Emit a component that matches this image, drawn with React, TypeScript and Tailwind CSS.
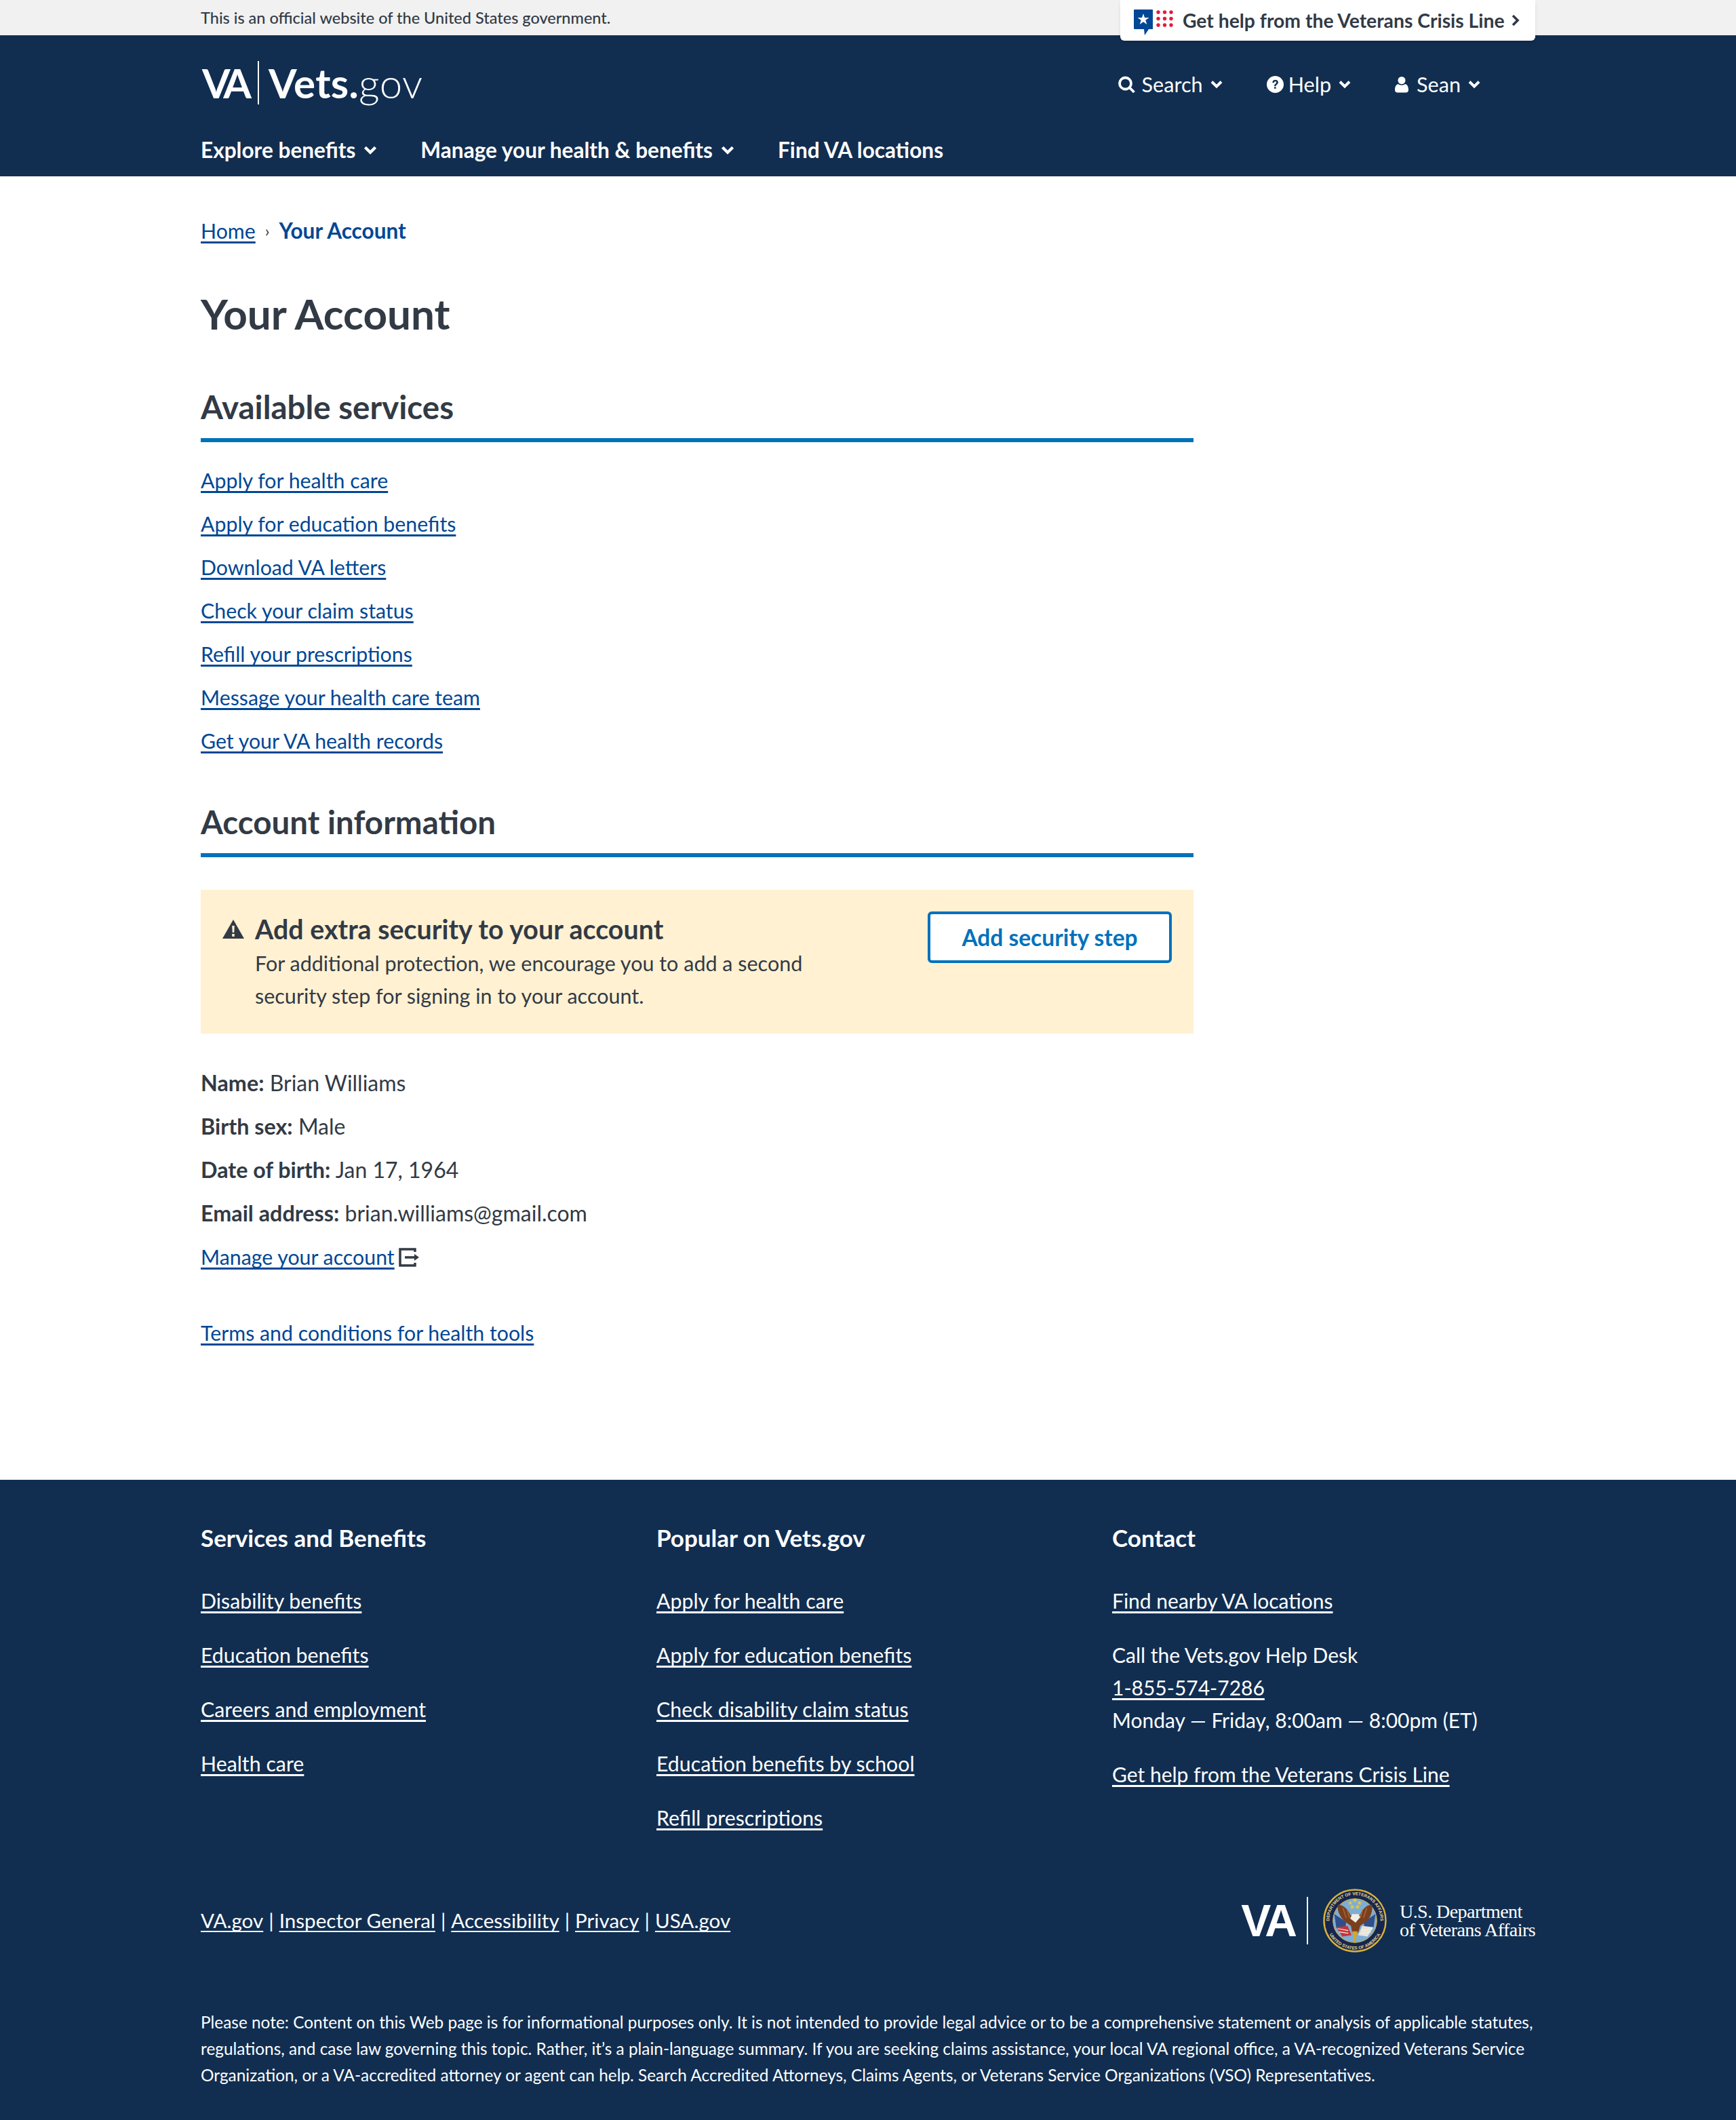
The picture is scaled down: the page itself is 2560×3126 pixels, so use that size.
import React from 'react';

const services = [
  'Apply for health care',
  'Apply for education benefits',
  'Download VA letters',
  'Check your claim status',
  'Refill your prescriptions',
  'Message your health care team',
  'Get your VA health records',
];

const profile = [
  ['Name:', 'Brian Williams'],
  ['Birth sex:', 'Male'],
  ['Date of birth:', 'Jan 17, 1964'],
  ['Email address:', 'brian.williams@gmail.com'],
];

const footerBenefits = ['Disability benefits', 'Education benefits', 'Careers and employment', 'Health care'];
const footerPopular = [
  'Apply for health care',
  'Apply for education benefits',
  'Check disability claim status',
  'Education benefits by school',
  'Refill prescriptions',
];
const legal = ['VA.gov', 'Inspector General', 'Accessibility', 'Privacy', 'USA.gov'];

function Chevron({ className }: { className?: string }) {
  return (
    <svg viewBox="0 0 18 12" className={className} fill="none" stroke="currentColor" strokeWidth="4">
      <path d="M2 2l7 7 7-7" />
    </svg>
  );
}

function CrisisIcon() {
  return (
    <svg viewBox="0 0 58 38" className="w-[58px] h-[38px]">
      <path d="M1 0h26a1 1 0 0 1 1 1v28H22l-6 9-1-9H1a1 1 0 0 1-1-1V1a1 1 0 0 1 1-1z" fill="#004795" />
      <path d="M14 6l2 6h6.500l-5.200 3.800 2 6.200-5.300-3.800L8.700 22l2-6.200L5.500 12H12z" fill="#fff" />
      {[0, 1, 2].map((col) =>
        [0, 1, 2].map((row) => (
          <circle key={`${col}-${row}`} cx={36 + col * 9.5} cy={4 + row * 9.5} r="2.700" fill="#e31c3d" />
        )),
      )}
    </svg>
  );
}

function Seal() {
  return (
    <svg viewBox="0 0 96 96" className="w-[94px] h-[94px] shrink-0">
      <defs>
        <path id="sealTop" d="M9.500 48a38.500 38.500 0 0 1 77 0" />
        <path id="sealBottom" d="M4.500 48a43.500 43.500 0 0 0 87 0" />
      </defs>
      <circle cx="48" cy="48" r="46.500" fill="#16264f" stroke="#d9b13c" strokeWidth="2.500" />
      <circle cx="48" cy="48" r="33" fill="#7eaed3" stroke="#d8b440" strokeWidth="1" />
      <text className="font-['Liberation_Sans',sans-serif]" fontSize="6.500" fontWeight="700" fill="#e8d58a">
        <textPath href="#sealTop" startOffset="50%" textAnchor="middle">DEPARTMENT OF VETERANS AFFAIRS</textPath>
      </text>
      <text className="font-['Liberation_Sans',sans-serif]" fontSize="6.500" fontWeight="700" fill="#e8d58a">
        <textPath href="#sealBottom" startOffset="50%" textAnchor="middle">UNITED STATES OF AMERICA</textPath>
      </text>
      <path d="M17 38l18 12-2 12-13-3z" fill="#2f4f8a" />
      <path d="M79 38L61 50l2 12 13-3z" fill="#2f4f8a" />
      <path d="M20 58l17-2 6 14-14 2z" fill="#c8333a" />
      <path d="M76 58l-17-2-6 14 14 2z" fill="#e9e4da" />
      <path d="M22 60l16 3M24 65l14 2M74 60l-16 3M72 65l-14 2" stroke="#f5f1e6" strokeWidth="1.200" />
      <path d="M22 24c8 0 15 6 19 15l3 3 2-4h5l2 4 3-3c4-9 10-15 18-15 1 9-2 20-10 26l-8 6-3 10h-9l-2-10-8-6c-8-6-13-17-12-26z" fill="#7a3f1c" />
      <path d="M30 29l5 15M36 31l4 13M66 29l-5 15M60 31l-4 13" stroke="#a9683a" strokeWidth="1.500" />
      <path d="M44 38h9l3 5-7 8-8-6z" fill="#f2efe6" />
      <path d="M44 64l4 19 4-19z" fill="#d8a52a" />
      {[[41, 21], [48, 17], [55, 21], [44, 27], [52, 27]].map(([x, y]) => (
        <path key={`${x}-${y}`} d={`M${x} ${y - 3}l1 2.400h2.500l-2 1.600.8 2.500-2.300-1.500-2.300 1.500.8-2.500-2-1.600h2.500z`} fill="#eec643" />
      ))}
    </svg>
  );
}

function SectionHeading({ children }: { children: React.ReactNode }) {
  return (
    <h2 className="text-[47.500px] leading-[56px] font-bold text-[#323a45] pb-[18px] border-b-[6px] border-[#0071bb]">{children}</h2>
  );
}

function BodyLink({ children }: { children: React.ReactNode }) {
  return <a href="#" className="text-[#004795] text-[30.300px] underline underline-offset-[4px] [text-decoration-skip-ink:none]">{children}</a>;
}

function FooterLink({ children }: { children: React.ReactNode }) {
  return <a href="#" className="text-white underline underline-offset-[4px] [text-decoration-skip-ink:none]">{children}</a>;
}

export default function App() {
  return (
    <div className="font-['Lato','Liberation_Sans',sans-serif] text-[32px] text-[#323a45] bg-white">
      <div className="h-[52px] bg-[#f1f1f1] relative">
        <div className="w-[1968px] mx-auto relative">
          <div className="text-[23.500px] leading-[52px] font-medium">This is an official website of the United States government.</div>
          <a href="#" className="absolute top-0 right-0 w-[612px] h-[60px] bg-white rounded-b-[6px] shadow-md z-10 flex items-center pl-[20px] text-[28.300px] font-bold">
            <span className="self-start pt-[14px] mr-[14px] flex"><CrisisIcon /></span>
            <span>Get help from the Veterans Crisis Line</span>
            <svg viewBox="0 0 12 18" className="w-[12px] h-[18px] ml-[10px]" fill="none" stroke="currentColor" strokeWidth="3.600"><path d="M2 2l7 7-7 7" /></svg>
          </a>
        </div>
      </div>

      <header className="h-[208px] bg-[#112e51] text-white">
        <div className="w-[1968px] mx-auto">
          <div className="h-[140px] flex items-center justify-between">
            <div className="flex items-center">
              <span className="text-[60px] font-bold leading-none tracking-[-7px] pl-[2px] pr-[2px]">VA</span>
              <span className="w-[2px] h-[64px] bg-white mx-[14px]" />
              <span className="text-[60px] font-bold leading-none tracking-[0.300px]">Vets.</span>
              <span className="text-[60px] font-light leading-none tracking-[0.500px]">gov</span>
            </div>
            <div className="flex items-center text-[30.600px] mr-[81px] mt-[6px]">
              <span className="flex items-center">
                <svg viewBox="0 0 26 26" className="w-[27px] h-[26px] mr-[9px]" fill="none" stroke="currentColor" strokeWidth="3.800"><circle cx="11" cy="11" r="8.500" /><path d="M17 17l7 7" /></svg>
                Search
                <Chevron className="w-[18px] h-[13px] ml-[11px]" />
              </span>
              <span className="flex items-center ml-[65px]">
                <svg viewBox="0 0 24 24" className="w-[25px] h-[25px] mr-[7px]"><circle cx="12" cy="12" r="12" fill="#fff" /><path d="M8 9.500c0-2.500 1.800-4 4.200-4s4 1.400 4 3.500c0 3-3.200 3-3.200 5.500h-2.400c0-3.400 3-3.500 3-5.400 0-.9-.6-1.400-1.500-1.400s-1.600.7-1.700 1.800zM10.600 15.500h2.500V18h-2.500z" fill="#112e51" /></svg>
                Help
                <Chevron className="w-[18px] h-[13px] ml-[11px]" />
              </span>
              <span className="flex items-center ml-[65px]">
                <svg viewBox="0 0 20 24" className="w-[20px] h-[25px] mr-[12px]" fill="#fff"><circle cx="10" cy="6" r="5.500" /><path d="M0 20c0-5 2-8 5-8.500 3 2 7 2 10 0 3 .5 5 3.500 5 8.500 0 3-2 4-4 4H4c-2 0-4-1-4-4z" /></svg>
                Sean
                <Chevron className="w-[18px] h-[13px] ml-[11px]" />
              </span>
            </div>
          </div>
          <nav className="flex items-center text-[31.600px] font-bold leading-[44px] mt-[7px]">
            <span className="flex items-center">Explore benefits<Chevron className="w-[20px] h-[13px] ml-[12px]" /></span>
            <span className="flex items-center ml-[64px]">Manage your health &amp; benefits<Chevron className="w-[20px] h-[13px] ml-[12px]" /></span>
            <span className="ml-[64px]">Find VA locations</span>
          </nav>
        </div>
      </header>

      <main className="w-[1968px] mx-auto h-[1922px] pt-[58px]">
        <div className="text-[30px] leading-[44px] flex items-center">
          <BodyLink>Home</BodyLink>
          <span className="mx-[14px] text-[24px] text-[#323a45]">›</span>
          <span className="font-bold text-[31.600px] text-[#004795]">Your Account</span>
        </div>
        <h1 className="text-[62px] leading-[72px] font-bold mt-[64px]">Your Account</h1>
        <div className="w-[1464px] mt-[74px]">
          <SectionHeading>Available services</SectionHeading>
          <ul className="mt-[24px] flex flex-col">
            {services.map((s) => (
              <li key={s} className="h-[64px] leading-[64px]"><BodyLink>{s}</BodyLink></li>
            ))}
          </ul>
          <div className="mt-[60px]"><SectionHeading>Account information</SectionHeading></div>
          <div className="mt-[48px] h-[212px] bg-[#fff1d2] flex justify-between px-[32px] pt-[32px]">
            <div className="flex">
              <svg viewBox="0 0 32 28" className="w-[32px] h-[30px] mt-[11px] mr-[16px] shrink-0"><path d="M16 0l16 28H0z" fill="#323a45" /><path d="M14.200 9h3.600l-.5 10h-2.600zM14.200 21h3.600v4h-3.600z" fill="#fff1d2" /></svg>
              <div>
                <div className="text-[39.400px] leading-[52px] font-bold">Add extra security to your account</div>
                <p className="w-[860px] text-[30.500px] leading-[48px]">For additional protection, we encourage you to add a second security step for signing in to your account.</p>
              </div>
            </div>
            <a href="#" className="w-[360px] h-[76px] border-[4px] border-[#0071bb] rounded-[6px] bg-white text-[#0071bb] text-[33.500px] font-bold flex items-center justify-center">Add security step</a>
          </div>
          <dl className="mt-[41px]">
            {profile.map(([k, v]) => (
              <div key={k} className="h-[64px] leading-[64px]"><b className="text-[32.300px]">{k}</b> {v}</div>
            ))}
          </dl>
          <div className="h-[64px] leading-[64px] flex items-center">
            <BodyLink>Manage your account</BodyLink>
            <svg viewBox="0 0 30 28" className="w-[30px] h-[28px] ml-[6px] mt-[2px]" fill="none" stroke="#323a45" strokeWidth="3.500"><path d="M24 6V2H2v24h22v-4" /><path d="M9 14h15" /><path d="M23 9l7 5-7 5z" fill="#323a45" stroke="none" /></svg>
          </div>
          <div className="mt-[48px] h-[64px] leading-[64px]"><BodyLink>Terms and conditions for health tools</BodyLink></div>
        </div>
      </main>

      <footer className="h-[944px] bg-[#112e51] text-white">
        <div className="w-[1968px] mx-auto pt-[63px]">
          <div className="grid grid-cols-[672px_672px_1fr] h-[501px]">
            <div>
              <h3 className="text-[35px] leading-[44px] font-bold mb-[49px]">Services and Benefits</h3>
              <ul className="flex flex-col gap-[36px]">
                {footerBenefits.map((s) => <li key={s} className="leading-[44px] text-[30.300px]"><FooterLink>{s}</FooterLink></li>)}
              </ul>
            </div>
            <div>
              <h3 className="text-[35px] leading-[44px] font-bold mb-[49px]">Popular on Vets.gov</h3>
              <ul className="flex flex-col gap-[36px]">
                {footerPopular.map((s) => <li key={s} className="leading-[44px] text-[30.300px]"><FooterLink>{s}</FooterLink></li>)}
              </ul>
            </div>
            <div className="text-[30px]">
              <h3 className="text-[35px] leading-[44px] font-bold mb-[49px]">Contact</h3>
              <div className="leading-[44px]"><FooterLink>Find nearby VA locations</FooterLink></div>
              <div className="mt-[34px] leading-[48px]">
                <div>Call the Vets.gov Help Desk</div>
                <div><FooterLink>1-855-574-7286</FooterLink></div>
                <div>Monday — Friday, 8:00am — 8:00pm (ET)</div>
              </div>
              <div className="mt-[34px] leading-[44px]"><FooterLink>Get help from the Veterans Crisis Line</FooterLink></div>
            </div>
          </div>
          <div className="flex items-center justify-between h-[96px] mt-[38px]">
            <div className="text-[29.600px] flex items-center">
              {legal.map((l, i) => (
                <span key={l}>
                  {i > 0 && <span className="mx-[8px]">|</span>}
                  <FooterLink>{l}</FooterLink>
                </span>
              ))}
            </div>
            <div className="flex items-center">
              <span className="font-['Liberation_Sans',sans-serif] text-[66px] font-bold leading-none tracking-[-4px] pr-[4px]">VA</span>
              <span className="w-[2px] h-[70px] bg-white ml-[14px] mr-[22px]" />
              <Seal />
              <div className="font-['Liberation_Serif',serif] text-[28px] leading-[27px] ml-[19px] tracking-[-0.550px]">
                <div>U.S. Department</div>
                <div>of Veterans Affairs</div>
              </div>
            </div>
          </div>
          <p className="mt-[82px] text-[24.400px] leading-[39px]">
            Please note: Content on this Web page is for informational purposes only. It is not intended to provide legal advice or to be a comprehensive statement or analysis of applicable statutes, regulations, and case law governing this topic. Rather, it’s a plain-language summary. If you are seeking claims assistance, your local VA regional office, a VA-recognized Veterans Service Organization, or a VA-accredited attorney or agent can help. Search Accredited Attorneys, Claims Agents, or Veterans Service Organizations (VSO) Representatives.
          </p>
        </div>
      </footer>
    </div>
  );
}
